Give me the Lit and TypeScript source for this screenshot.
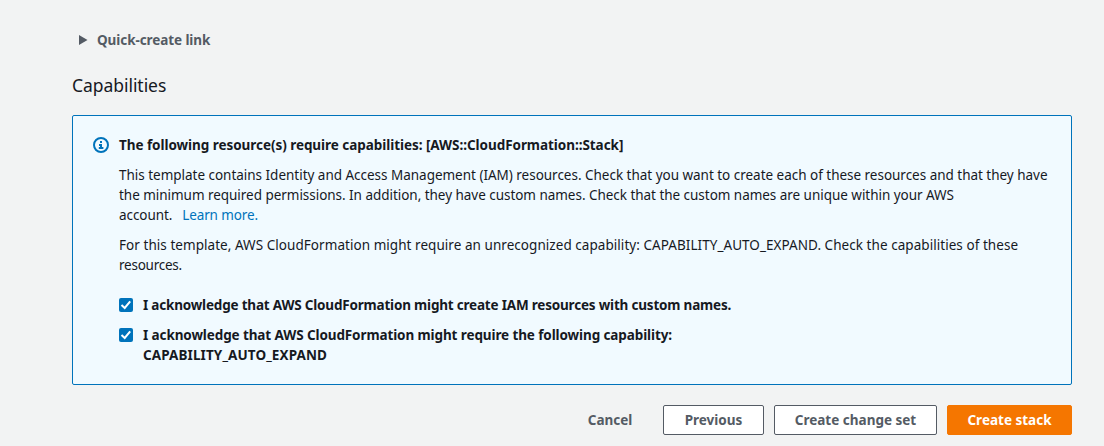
import { LitElement, html, css } from 'lit';
import { customElement, property } from 'lit/decorators.js';

@customElement('info-icon')
class InfoIcon extends LitElement {
  static styles = css`
    :host { display: block; width: 16px; height: 16px; }
    svg { display: block; }
  `;
  render() {
    return html`<svg width="16" height="16" viewBox="0 0 16 16" fill="none" stroke="#0073bb" stroke-width="2">
      <circle cx="8" cy="8" r="7"></circle>
      <path d="M8 4v2M6 8h3M8 7v4M5.8 11h4.6"></path>
    </svg>`;
  }
}

@customElement('check-box')
class CheckBox extends LitElement {
  @property({ type: Boolean }) checked = false;
  static styles = css`
    :host { display: block; flex: none; width: 14px; height: 14px; border-radius: 2px; background: #0073bb; }
    svg { display: block; }
  `;
  render() {
    return this.checked
      ? html`<svg width="14" height="14" viewBox="0 0 14 14" fill="none" stroke="#fff" stroke-width="2">
          <polyline points="2.5,7 5.7,10 11.2,3.4"></polyline>
        </svg>`
      : '';
  }
}

@customElement('app-root')
class AppRoot extends LitElement {
  static styles = css`
    :host {
      display: block; box-sizing: border-box; height: 446px; overflow: hidden;
      padding: 30px 32px 0 72px; background: #f2f3f3; color: #16191f;
      font: 13.5px/20px "Noto Sans", sans-serif;
    }
    .expander { display: flex; align-items: center; gap: 9px; padding-left: 7px; color: #545b64; font-weight: 700; letter-spacing: -0.08px; }
    .expander svg { display: block; }
    h2 { margin: 24px 0 18px; font-size: 17.5px; line-height: 23px; font-weight: 400; letter-spacing: -0.05px; }
    .panel {
      display: flex; gap: 10px; box-sizing: border-box; height: 270px; padding: 19px 20px;
      border: 1px solid #0073bb; border-radius: 2px; background: #f1faff;
    }
    info-icon { flex: none; margin-top: 2px; }
    .body { flex: 1; min-width: 0; white-space: nowrap; }
    .line { display: block; }
    .title { font-weight: 700; letter-spacing: -0.05px; }
    p { margin: 10px 0 0; }
    .iam-a { letter-spacing: -0.02px; }
    .iam-b { letter-spacing: -0.035px; }
    .iam-c { letter-spacing: -0.08px; }
    .link { margin-left: 10px; color: #0073bb; text-decoration: none; letter-spacing: -0.12px; }
    .cap-a { letter-spacing: 0.05px; }
    .cap-b { letter-spacing: -0.25px; }
    .checks { display: grid; gap: 10px; margin-top: 20px; font-weight: 700; }
    .check { display: flex; gap: 10px; }
    check-box { margin-top: 3px; }
    .ack-a { letter-spacing: -0.195px; }
    .ack-b { letter-spacing: -0.104px; }
    .ack-c { letter-spacing: 0.105px; }
    .actions { display: flex; justify-content: flex-end; gap: 10px; margin-top: 20px; }
    button {
      box-sizing: border-box; height: 30px; padding: 0; border: 1px solid #545b64; border-radius: 2px;
      background: #fff; color: #545b64; font: 700 13.5px/20px "Noto Sans", sans-serif; white-space: nowrap;
    }
    .cancel { width: 86px; border-color: transparent; background: none; letter-spacing: -0.05px; }
    .previous { width: 101px; }
    .change { width: 163px; }
    .create { width: 125px; border-color: #f57600; background: #f57600; color: #fff; }
  `;
  render() {
    return html`
      <div class="expander">
        <svg width="9" height="10" viewBox="0 0 9 10"><path d="M0 0L8.5 5L0 10Z" fill="#545b64"></path></svg>
        <span>Quick-create link</span>
      </div>
      <h2>Capabilities</h2>
      <section class="panel">
        <info-icon></info-icon>
        <div class="body">
          <div class="title">The following resource(s) require capabilities: [AWS::CloudFormation::Stack]</div>
          <p>
            <span class="line iam-a">This template contains Identity and Access Management (IAM) resources. Check that you want to create each of these resources and that they have</span>
            <span class="line iam-b">the minimum required permissions. In addition, they have custom names. Check that the custom names are unique within your AWS</span>
            <span class="line"><span class="iam-c">account.</span><a class="link">Learn more.</a></span>
          </p>
          <p>
            <span class="line cap-a">For this template, AWS CloudFormation might require an unrecognized capability: CAPABILITY_AUTO_EXPAND. Check the capabilities of these</span>
            <span class="line cap-b">resources.</span>
          </p>
          <div class="checks">
            <label class="check"><check-box checked></check-box><span class="ack-a">I acknowledge that AWS CloudFormation might create IAM resources with custom names.</span></label>
            <label class="check"><check-box checked></check-box><span>
              <span class="line ack-b">I acknowledge that AWS CloudFormation might require the following capability:</span>
              <span class="line ack-c">CAPABILITY_AUTO_EXPAND</span>
            </span></label>
          </div>
        </div>
      </section>
      <div class="actions">
        <button class="cancel">Cancel</button>
        <button class="previous">Previous</button>
        <button class="change">Create change set</button>
        <button class="create">Create stack</button>
      </div>
    `;
  }
}
